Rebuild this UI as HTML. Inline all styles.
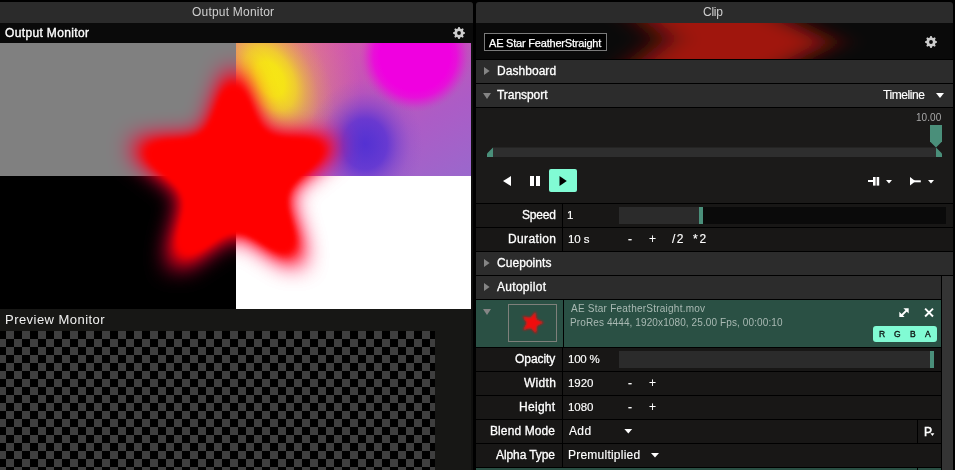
<!DOCTYPE html>
<html>
<head>
<meta charset="utf-8">
<title>Clip</title>
<style>
*{box-sizing:border-box;margin:0;padding:0}
html,body{width:955px;height:470px;overflow:hidden;background:#000}
body{font-family:"Liberation Sans",sans-serif;font-size:12px;color:#fff;position:relative}
.a{position:absolute}
.tx{position:absolute;white-space:pre;line-height:normal;will-change:transform}
.hrow{position:absolute;left:476px;width:477px;height:23px;background:#2c2c2c}
.prow{position:absolute;left:476px;width:477px;height:23px;background:#181716}
.vs{position:absolute;left:562px;width:1px;background:#000}
.sl{position:absolute;left:619px;height:17px;background:#2b2b2b}
.hd{position:absolute;width:4px;height:17px;background:#4a8f7a}
#om1{left:192.45px;top:5.14px;font-size:12px;font-weight:normal;color:#cfcfcf;letter-spacing:0.211px;}
#om2{left:4.97px;top:26.14px;font-size:12px;font-weight:normal;color:#fff;letter-spacing:0.356px;-webkit-text-stroke:0.35px #fff;}
#pm{left:5.12px;top:312.24px;font-size:13px;font-weight:normal;color:#f0f0f0;letter-spacing:0.459px;}
#clip{left:702.96px;top:5.14px;font-size:12px;font-weight:normal;color:#cfcfcf;letter-spacing:-0.239px;}
#name{left:489.08px;top:36.55px;font-size:11px;font-weight:normal;color:#fff;letter-spacing:-0.203px;-webkit-text-stroke:0.25px #fff;}
#dash{left:496.97px;top:64.14px;font-size:12px;font-weight:normal;color:#fff;letter-spacing:0.048px;-webkit-text-stroke:0.3px #fff;}
#tran{left:497.29px;top:88.14px;font-size:12px;font-weight:normal;color:#fff;letter-spacing:-0.055px;-webkit-text-stroke:0.3px #fff;}
#tl{left:882.93px;top:88.14px;font-size:12px;font-weight:normal;color:#fff;letter-spacing:-0.431px;-webkit-text-stroke:0.15px #fff;}
#t10{left:916.34px;top:111.95px;font-size:10px;font-weight:normal;color:#a8a8a8;letter-spacing:0.044px;}
#spd{left:522.21px;top:208.14px;font-size:12px;font-weight:normal;color:#fff;letter-spacing:-0.194px;-webkit-text-stroke:0.3px #fff;}
#dur{left:507.97px;top:232.14px;font-size:12px;font-weight:normal;color:#fff;letter-spacing:0.384px;-webkit-text-stroke:0.3px #fff;}
#v1{left:567.37px;top:208.59px;font-size:11.5px;font-weight:normal;color:#fff;letter-spacing:0.000px;-webkit-text-stroke:0.15px #fff;}
#v10s{left:567.88px;top:232.59px;font-size:11.5px;font-weight:normal;color:#fff;letter-spacing:-0.070px;-webkit-text-stroke:0.15px #fff;}
#dm{left:627.95px;top:232.14px;font-size:12px;font-weight:normal;color:#fff;letter-spacing:0.000px;-webkit-text-stroke:0.15px #fff;}
#dp{left:649.17px;top:232.14px;font-size:12px;font-weight:normal;color:#fff;letter-spacing:0.000px;-webkit-text-stroke:0.15px #fff;}
#dd2{left:671.61px;top:232.14px;font-size:12px;font-weight:normal;color:#fff;letter-spacing:1.481px;-webkit-text-stroke:0.15px #fff;}
#dx2{left:692.70px;top:232.14px;font-size:12px;font-weight:normal;color:#fff;letter-spacing:1.748px;-webkit-text-stroke:0.15px #fff;}
#cue{left:496.86px;top:256.14px;font-size:12px;font-weight:normal;color:#fff;letter-spacing:0.048px;-webkit-text-stroke:0.3px #fff;}
#auto{left:497.45px;top:280.14px;font-size:12px;font-weight:normal;color:#fff;letter-spacing:0.290px;-webkit-text-stroke:0.3px #fff;}
#l1{left:571.29px;top:302.55px;font-size:10px;font-weight:normal;color:#a9b9b3;letter-spacing:0.240px;}
#l2{left:570.23px;top:316.65px;font-size:10px;font-weight:normal;color:#a9b9b3;letter-spacing:0.109px;}
#opa{left:515.22px;top:352.14px;font-size:12px;font-weight:normal;color:#fff;letter-spacing:-0.066px;-webkit-text-stroke:0.3px #fff;}
#wid{left:523.93px;top:376.14px;font-size:12px;font-weight:normal;color:#fff;letter-spacing:0.291px;-webkit-text-stroke:0.3px #fff;}
#hei{left:519.20px;top:400.14px;font-size:12px;font-weight:normal;color:#fff;letter-spacing:0.292px;-webkit-text-stroke:0.3px #fff;}
#ble{left:490.35px;top:424.14px;font-size:12px;font-weight:normal;color:#fff;letter-spacing:0.102px;-webkit-text-stroke:0.3px #fff;}
#alp{left:496.29px;top:448.14px;font-size:12px;font-weight:normal;color:#fff;letter-spacing:-0.090px;-webkit-text-stroke:0.3px #fff;}
#v100{left:568.29px;top:352.59px;font-size:11.5px;font-weight:normal;color:#fff;letter-spacing:-0.227px;-webkit-text-stroke:0.15px #fff;}
#v1920{left:568.29px;top:376.59px;font-size:11.5px;font-weight:normal;color:#fff;letter-spacing:-0.061px;-webkit-text-stroke:0.15px #fff;}
#v1080{left:568.29px;top:400.59px;font-size:11.5px;font-weight:normal;color:#fff;letter-spacing:-0.061px;-webkit-text-stroke:0.15px #fff;}
#vadd{left:568.71px;top:424.14px;font-size:12px;font-weight:normal;color:#fff;letter-spacing:0.365px;-webkit-text-stroke:0.15px #fff;}
#vpre{left:568.31px;top:448.14px;font-size:12px;font-weight:normal;color:#fff;letter-spacing:0.229px;-webkit-text-stroke:0.15px #fff;}
#wm{left:627.95px;top:376.14px;font-size:12px;font-weight:normal;color:#fff;letter-spacing:0.000px;-webkit-text-stroke:0.15px #fff;}
#wp{left:649.17px;top:376.14px;font-size:12px;font-weight:normal;color:#fff;letter-spacing:0.000px;-webkit-text-stroke:0.15px #fff;}
#hm{left:627.95px;top:400.14px;font-size:12px;font-weight:normal;color:#fff;letter-spacing:0.000px;-webkit-text-stroke:0.15px #fff;}
#hp{left:649.17px;top:400.14px;font-size:12px;font-weight:normal;color:#fff;letter-spacing:0.000px;-webkit-text-stroke:0.15px #fff;}
#pp{left:924.45px;top:424.64px;font-size:12px;font-weight:normal;color:#fff;letter-spacing:0.000px;-webkit-text-stroke:0.5px #fff;}
#cR{left:879.01px;top:329.11px;font-size:8.5px;font-weight:normal;color:#0e1613;letter-spacing:0.000px;-webkit-text-stroke:0.35px #0e1613;}
#cG{left:894.07px;top:329.11px;font-size:8.5px;font-weight:normal;color:#0e1613;letter-spacing:0.000px;-webkit-text-stroke:0.35px #0e1613;}
#cB{left:909.66px;top:329.11px;font-size:8.5px;font-weight:normal;color:#0e1613;letter-spacing:0.000px;-webkit-text-stroke:0.35px #0e1613;}
#cA{left:924.74px;top:329.11px;font-size:8.5px;font-weight:normal;color:#0e1613;letter-spacing:0.000px;-webkit-text-stroke:0.35px #0e1613;}
</style>
</head>
<body>

<!-- ================= LEFT PANEL ================= -->
<div class="a" style="left:0;top:2px;width:473px;height:468px;background:#171715;border-radius:0 3px 0 0"></div>
<div class="a" style="left:471px;top:43px;width:2px;height:427px;background:#0f0f0e"></div>
<div class="a" style="left:0;top:2px;width:473px;height:21px;background:#2b2b2b;border-radius:0 3px 0 0"></div>
<div class="a" style="left:0;top:23px;width:473px;height:20px;background:#0a0a0a"></div>
<svg class="a" style="left:453px;top:27.1px" width="12" height="12" viewBox="-6 -6 12 12"><path fill="#cdcdcd" fill-rule="evenodd" d="M-1.10,-4.57 L-0.71,-5.96 L0.71,-5.96 L1.10,-4.57 L2.46,-4.01 L3.71,-4.71 L4.71,-3.71 L4.01,-2.46 L4.57,-1.10 L5.96,-0.71 L5.96,0.71 L4.57,1.10 L4.01,2.46 L4.71,3.71 L3.71,4.71 L2.46,4.01 L1.10,4.57 L0.71,5.96 L-0.71,5.96 L-1.10,4.57 L-2.46,4.01 L-3.71,4.71 L-4.71,3.71 L-4.01,2.46 L-4.57,1.10 L-5.96,0.71 L-5.96,-0.71 L-4.57,-1.10 L-4.01,-2.46 L-4.71,-3.71 L-3.71,-4.71 L-2.46,-4.01Z M1.90,0 A1.90,1.90 0 1,0 -1.90,0 A1.90,1.90 0 1,0 1.90,0Z"/></svg>

<!-- output video -->
<div class="a" style="left:0;top:43px;width:471px;height:266px;overflow:hidden;background:#000">
  <div class="a" style="left:0;top:0;width:236px;height:133px;background:#808080"></div>
  <svg class="a" id="grad" style="left:236px;top:0" width="235" height="133" viewBox="0 0 235 133">
    <defs>
      <linearGradient id="lg" x1="0" y1="0" x2="1" y2="1"><stop offset="0" stop-color="#e25aa6"/><stop offset=".4" stop-color="#c654b6"/><stop offset=".7" stop-color="#ac5cc6"/><stop offset="1" stop-color="#9a68cc"/></linearGradient>
      <radialGradient id="gy"><stop offset="0" stop-color="#f6e614"/><stop offset=".22" stop-color="#f6e614" stop-opacity=".97"/><stop offset=".4" stop-color="#f4de1c" stop-opacity=".78"/><stop offset=".56" stop-color="#f0d028" stop-opacity=".46"/><stop offset=".76" stop-color="#ecc030" stop-opacity=".15"/><stop offset="1" stop-color="#e8b040" stop-opacity="0"/></radialGradient>
      <radialGradient id="gy2"><stop offset="0" stop-color="#f0d030" stop-opacity=".55"/><stop offset=".5" stop-color="#eec040" stop-opacity=".3"/><stop offset="1" stop-color="#e8a860" stop-opacity="0"/></radialGradient>
      <radialGradient id="gbl"><stop offset="0" stop-color="#4a2cd4" stop-opacity=".9"/><stop offset=".18" stop-color="#4c2ed4" stop-opacity=".84"/><stop offset=".38" stop-color="#4c2cd6" stop-opacity=".72"/><stop offset=".58" stop-color="#5a36d2" stop-opacity=".4"/><stop offset=".78" stop-color="#6a42d0" stop-opacity=".14"/><stop offset="1" stop-color="#7a50cc" stop-opacity="0"/></radialGradient>
      <radialGradient id="gm"><stop offset="0" stop-color="#f000e0"/><stop offset=".62" stop-color="#f000e0"/><stop offset=".74" stop-color="#ee04de" stop-opacity=".86"/><stop offset=".84" stop-color="#ea0cda" stop-opacity=".5"/><stop offset=".93" stop-color="#e418d4" stop-opacity=".16"/><stop offset="1" stop-color="#e020d0" stop-opacity="0"/></radialGradient>
    </defs>
    <rect width="235" height="133" fill="url(#lg)"/>
    <ellipse cx="40" cy="34" rx="80" ry="100" transform="rotate(-30 40 34)" fill="url(#gy2)"/>
    <ellipse cx="34" cy="36" rx="56" ry="84" transform="rotate(-30 34 36)" fill="url(#gy)"/>
    <ellipse cx="129" cy="101" rx="58" ry="66" fill="url(#gbl)"/>
    <circle cx="179" cy="13" r="56" fill="url(#gm)"/>
  </svg>
  <div class="a" style="left:236px;top:133px;width:235px;height:133px;background:#fff"></div>
  <svg class="a" style="left:0;top:0" width="471" height="266" viewBox="0 0 471 266">
    <defs><filter id="bl" x="-30%" y="-30%" width="160%" height="160%" color-interpolation-filters="sRGB"><feGaussianBlur stdDeviation="13.0"/><feComponentTransfer><feFuncA type="table" tableValues="0.000 0.100 0.200 0.300 0.400 0.500 0.600 0.700 0.800 0.885 0.955 0.990 1.000 1.000 1.000 1.000 1.000 1.000 1.000 1.000 1.000"/></feComponentTransfer><feColorMatrix type="matrix" values="1 0 0 0 0  0 0 0 0 0  0 0 0 -0.3 0.3  0 0 0 1 0"/></filter></defs>
    <polygon id="st2" filter="url(#bl)" fill="#ff0000" stroke="#ff0000" stroke-width="12.0" stroke-linejoin="round" points="233.3,34.5 259.1,100.1 329.6,101.9 275.2,146.8 295.2,214.4 235.7,176.5 177.6,216.4 195.3,148.2 139.4,105.3 209.7,101.0"/>
  </svg>
</div>

<!-- preview monitor -->
<div class="a" id="chk" style="left:0;top:331px;width:435px;height:139px;background:repeating-conic-gradient(#3f3f3f 0 25%,#000 0 50%) -2px 0/16px 16px"></div>

<!-- ================= RIGHT PANEL ================= -->
<div class="a" style="left:476px;top:2px;width:477px;height:21px;background:#2b2b2b;border-radius:3px 3px 0 0"></div>
<div class="a" style="left:476px;top:23px;width:477px;height:36px;background:#0a0a0a;overflow:hidden">
  <svg class="a" style="left:0;top:0" width="477" height="36" viewBox="0 0 477 36">
    <defs><filter id="bl2" x="-40%" y="-100%" width="180%" height="300%"><feGaussianBlur stdDeviation="18 6"/></filter></defs>
    <polygon filter="url(#bl2)" fill="#a0120c" points="150,-18 282,-18 356,19 290,54 143,54 190,16"/>
  </svg>
</div>
<div class="a" style="left:484px;top:33px;width:123px;height:18px;background:#000;border:1px solid #7a7a7a"></div>
<svg class="a" style="left:925px;top:36.1px" width="12" height="12" viewBox="-6 -6 12 12"><path fill="#cdcdcd" fill-rule="evenodd" d="M-1.10,-4.57 L-0.71,-5.96 L0.71,-5.96 L1.10,-4.57 L2.46,-4.01 L3.71,-4.71 L4.71,-3.71 L4.01,-2.46 L4.57,-1.10 L5.96,-0.71 L5.96,0.71 L4.57,1.10 L4.01,2.46 L4.71,3.71 L3.71,4.71 L2.46,4.01 L1.10,4.57 L0.71,5.96 L-0.71,5.96 L-1.10,4.57 L-2.46,4.01 L-3.71,4.71 L-4.71,3.71 L-4.01,2.46 L-4.57,1.10 L-5.96,0.71 L-5.96,-0.71 L-4.57,-1.10 L-4.01,-2.46 L-4.71,-3.71 L-3.71,-4.71 L-2.46,-4.01Z M1.90,0 A1.90,1.90 0 1,0 -1.90,0 A1.90,1.90 0 1,0 1.90,0Z"/></svg>

<!-- Dashboard / Transport headers -->
<div class="hrow" style="top:60px"></div>
<div class="hrow" style="top:84px"></div>
<svg class="a" style="left:476px;top:60px" width="477" height="48" viewBox="0 0 477 48">
  <polygon fill="#858585" points="8,7 8,15 13.6,11"/>
  <polygon fill="#858585" points="7,33 15,33 11,39"/>
  <polygon fill="#fff" points="460,33 468,33 464,38"/>
</svg>

<!-- timeline area -->
<div class="a" style="left:476px;top:108px;width:477px;height:95px;background:#1b1a19"></div>
<svg class="a" style="left:476px;top:108px" width="477" height="95" viewBox="0 0 477 95">
  <rect x="17" y="39.5" width="443" height="9.5" fill="#2e2e2e"/>
  <polygon fill="#4a8f7a" points="11,49 11,45.5 17,39.5 17,49"/>
  <polygon fill="#4a8f7a" points="460,39.5 466,45.5 466,49 460,49"/>
  <polygon fill="#4a8f7a" points="454,17 466,17 466,33.5 460,39.5 454,33.5"/>
  <!-- rewind, pause -->
  <polygon fill="#fff" points="35,68 35,78 27,73"/>
  <rect x="54" y="68" width="4" height="10" fill="#fff"/><rect x="60" y="68" width="4" height="10" fill="#fff"/>
  <!-- play button -->
  <rect x="73" y="61" width="28" height="23" rx="2" fill="#81fbd4"/>
  <polygon fill="#000" points="83.5,68 83.5,78 90.8,73"/>
  <!-- right icons -->
  <rect x="392" y="72" width="6" height="2" fill="#fff"/>
  <rect x="397" y="69" width="2.6" height="8.6" fill="#fff"/><rect x="400.6" y="69" width="2.6" height="8.6" fill="#fff"/>
  <polygon fill="#fff" points="410,72 416,72 413,75.6"/>
  <polygon fill="#fff" points="434,69 434,77.6 439.5,73.3"/>
  <rect x="438" y="72.3" width="6.8" height="2" fill="#fff"/>
  <polygon fill="#fff" points="452,72 458,72 455,75.6"/>
</svg>

<!-- Speed / Duration -->
<div class="prow" style="top:204px"></div>
<div class="prow" style="top:228px"></div>
<div class="vs" style="top:204px;height:47px"></div>
<div class="a" style="left:619px;top:207px;width:327px;height:17px;background:#0a0a0a"></div>
<div class="sl" style="top:207px;width:80px"></div>
<div class="hd" style="left:699px;top:207px"></div>

<!-- Cuepoints / Autopilot -->
<div class="hrow" style="top:252px"></div>
<div class="hrow" style="top:276px;width:465px"></div>
<svg class="a" style="left:476px;top:252px" width="20" height="48" viewBox="0 0 20 48">
  <polygon fill="#858585" points="8,7 8,15 13.6,11"/>
  <polygon fill="#858585" points="8,31 8,39 13.6,35"/>
</svg>

<!-- scrollbar -->
<div class="a" style="left:942px;top:276px;width:11px;height:194px;background:#343434"></div>

<!-- Layer row -->
<div class="a" style="left:476px;top:300px;width:465px;height:47px;background:#2a5044"></div>
<div class="vs" style="top:300px;height:47px;left:563px"></div>
<div class="a" style="left:508px;top:304px;width:49px;height:38px;border:1px solid #7e807b;background:#2a5044"></div>
<svg class="a" style="left:476px;top:300px" width="465" height="47" viewBox="0 0 465 47">
  <defs><filter id="bl3" x="-30%" y="-30%" width="160%" height="160%"><feGaussianBlur stdDeviation="1.1"/></filter></defs>
  <polygon fill="#858585" points="7,9 15,9 11,15"/>
  <polygon stroke="#f00c0c" stroke-width="0.8" filter="url(#bl3)" fill="#f00c0c" points="67.2,22.5 60.6,25.9 60.0,33.2 54.7,28.0 47.5,29.7 50.9,23.1 47.1,16.7 54.4,17.9 59.2,12.3 60.4,19.6"/>
  <!-- expand icon -->
  <g stroke="#fff" stroke-width="1.8" fill="none" stroke-linecap="butt">
    <line x1="425" y1="16" x2="431.5" y2="9.5"/>
  </g>
  <polygon fill="#fff" points="427.4,8.3 432.7,8.3 432.7,13.6"/>
  <polygon fill="#fff" points="423.3,11.8 423.3,17.1 428.6,17.1"/>
  <!-- close X -->
  <g stroke="#fff" stroke-width="1.9" fill="none"><line x1="449.1" y1="8.6" x2="457" y2="16.5"/><line x1="457" y1="8.6" x2="449.1" y2="16.5"/></g>
  <!-- RGBA badge -->
  <rect x="397" y="26" width="64" height="16" rx="3" fill="#81fbd4"/>
</svg>

<!-- param rows -->
<div class="prow" style="top:348px;width:465px"></div>
<div class="prow" style="top:372px;width:465px"></div>
<div class="prow" style="top:396px;width:465px"></div>
<div class="prow" style="top:420px;width:465px"></div>
<div class="prow" style="top:444px;width:465px"></div>
<div class="vs" style="top:348px;height:119px"></div>
<div class="sl" style="top:351px;width:311px"></div>
<div class="hd" style="left:930px;top:351px"></div>
<div class="vs" style="left:917px;top:420px;height:23px"></div>
<svg class="a" style="left:476px;top:420px" width="465" height="47" viewBox="0 0 465 47">
  <polygon fill="#fff" points="148.4,9 156.2,9 152.3,13.4"/>
  <polygon fill="#fff" points="175,33 183,33 179,37.4"/>
  <polygon fill="#fff" points="454.4,13.3 458.4,13.3 456.4,16"/>
</svg>

<!-- next layer -->
<div class="a" style="left:476px;top:468px;width:465px;height:2px;background:#2a5044"></div>
<div class="vs" style="left:917px;top:468px;height:2px"></div>

<!-- texts -->
<div class="tx" id="om1">Output Monitor</div>
<div class="tx" id="om2">Output Monitor</div>
<div class="tx" id="pm">Preview Monitor</div>
<div class="tx" id="clip">Clip</div>
<div class="tx" id="name">AE Star FeatherStraight</div>
<div class="tx" id="dash">Dashboard</div>
<div class="tx" id="tran">Transport</div>
<div class="tx" id="tl">Timeline</div>
<div class="tx" id="t10">10.00</div>
<div class="tx" id="spd">Speed</div>
<div class="tx" id="dur">Duration</div>
<div class="tx" id="v1">1</div>
<div class="tx" id="v10s">10 s</div>
<div class="tx" id="dm">-</div>
<div class="tx" id="dp">+</div>
<div class="tx" id="dd2">/2</div>
<div class="tx" id="dx2">*2</div>
<div class="tx" id="cue">Cuepoints</div>
<div class="tx" id="auto">Autopilot</div>
<div class="tx" id="l1">AE Star FeatherStraight.mov</div>
<div class="tx" id="l2">ProRes 4444, 1920x1080, 25.00 Fps, 00:00:10</div>
<div class="tx" id="opa">Opacity</div>
<div class="tx" id="wid">Width</div>
<div class="tx" id="hei">Height</div>
<div class="tx" id="ble">Blend Mode</div>
<div class="tx" id="alp">Alpha Type</div>
<div class="tx" id="v100">100 %</div>
<div class="tx" id="v1920">1920</div>
<div class="tx" id="v1080">1080</div>
<div class="tx" id="vadd">Add</div>
<div class="tx" id="vpre">Premultiplied</div>
<div class="tx" id="wm">-</div>
<div class="tx" id="wp">+</div>
<div class="tx" id="hm">-</div>
<div class="tx" id="hp">+</div>
<div class="tx" id="pp">P</div>
<div class="tx" id="cR">R</div>
<div class="tx" id="cG">G</div>
<div class="tx" id="cB">B</div>
<div class="tx" id="cA">A</div>

</body>
</html>
